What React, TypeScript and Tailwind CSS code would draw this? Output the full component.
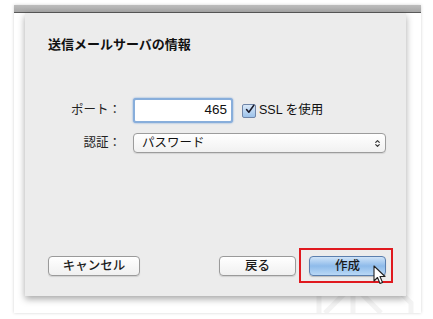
import { ChevronUp, ChevronDown } from 'lucide-react';

const font = { fontFamily: '"Liberation Sans", "Noto Sans CJK JP", sans-serif' };

function Button({ label, primary = false, w }: { label: string; primary?: boolean; w: string }) {
  return (
    <button
      type="button"
      className={`flex h-[20px] ${w} shrink-0 items-center justify-center rounded-[4px] border text-[12.5px] font-medium leading-none text-[#1a1a1a] ${
        primary
          ? 'border-[#5b7fae] bg-gradient-to-b from-[#cfe3f8] via-[#8ebbea] to-[#b9d8f6] shadow-[0_1px_1px_rgba(0,0,0,0.2)]'
          : 'border-[#9a9a9a] bg-gradient-to-b from-[#ffffff] to-[#f0f0f0] shadow-[0_1px_1px_rgba(0,0,0,0.12)]'
      }`}
    >
      {label}
    </button>
  );
}

export default function App() {
  return (
    <div className="h-[319px] w-[433px] overflow-hidden bg-white pt-[5px] pl-[14px]" style={font}>
      {/* ウィンドウ本体 */}
      <div className="relative h-[308px] w-[407px] bg-white shadow-[0_0_3px_rgba(0,0,0,0.18)]">
        <div className="h-[8px] border-b border-[#5a5a5a] bg-gradient-to-b from-[#bdbdbd] to-[#a6a6a6]" />

        {/* 背景の薄い図形 */}
        <svg className="absolute right-0 bottom-0" width="110" height="40" viewBox="0 0 110 40">
          <path d="M8 0 L8 40 M42 0 L42 40 M42 12 L70 40 M42 12 L14 40 M70 0 L100 30 L100 40" stroke="#f3f3f3" strokeWidth="5" fill="none" />
        </svg>

        {/* シート */}
        <div className="relative ml-[11px] flex h-[283px] w-[381px] flex-col bg-[#ececec] pt-[24px] pr-[20px] pb-[20px] pl-[23px] shadow-[0_3px_7px_rgba(0,0,0,0.35)]">
          <h1 className="text-[13px] font-bold leading-[16px] text-[#111]">送信メールサーバの情報</h1>

          <div className="mt-[45px] flex flex-col gap-[10px]">
            <div className="flex items-center">
              <span className="w-[73px] shrink-0 text-right text-[12.5px] text-[#222]">ポート：</span>
              <div className="ml-[12px] flex h-[25px] w-[100px] shrink-0 items-center justify-end rounded-[3px] border-[2px] border-[#88aedb] bg-white pr-[4px] text-[13.5px] text-[#111] shadow-[0_0_2px_#6d9bd6]">
                465
              </div>
              <span className="ml-[9px] flex h-[14px] w-[14px] shrink-0 items-center justify-center rounded-[2px] border border-[#6f85a8] bg-gradient-to-b from-[#d9e8f8] to-[#9cc2ea]">
                <svg width="13" height="13" viewBox="0 0 13 13" className="-mt-[3px] ml-[2px]">
                  <path d="M2 6.5 L5 10 L11.5 1" stroke="#1b1b2b" strokeWidth="2" fill="none" strokeLinecap="round" strokeLinejoin="round" />
                </svg>
              </span>
              <span className="ml-[3px] text-[12.5px] text-[#111]">SSL を使用</span>
            </div>
            <div className="flex items-center">
              <span className="w-[73px] shrink-0 text-right text-[12.5px] text-[#222]">認証：</span>
              <div className="ml-[12px] flex h-[20px] w-[253px] shrink-0 items-center justify-between rounded-[4px] border border-[#9c9c9c] bg-gradient-to-b from-white to-[#f1f1f1] pr-[4px] pl-[8px] text-[12.5px] text-[#111] shadow-[0_1px_1px_rgba(0,0,0,0.1)]">
                パスワード
                <span className="flex flex-col items-center text-[#333]">
                  <ChevronUp className="-mb-[3px] h-[7px] w-[7px]" strokeWidth={4} />
                  <ChevronDown className="h-[7px] w-[7px]" strokeWidth={4} />
                </span>
              </div>
            </div>
          </div>

          <div className="mt-auto flex items-center">
            <Button label="キャンセル" w="w-[92px]" />
            <div className="ml-auto flex gap-[13px]">
              <Button label="戻る" w="w-[77px]" />
              <Button label="作成" w="w-[77px]" primary />
            </div>
          </div>

          {/* 強調枠 */}
          <div className="pointer-events-none absolute top-[235px] left-[274px] h-[35px] w-[94px] border-[2px] border-[#e0191f]" />
          {/* カーソル */}
          <svg className="absolute top-[252px] left-[348px]" width="14" height="20" viewBox="0 0 14 20">
            <path d="M1 1 L1 16 L4.5 12.5 L7 18.5 L9.5 17.5 L7 11.5 L12 11.5 Z" fill="white" stroke="#222" strokeWidth="1.1" strokeLinejoin="round" />
          </svg>
        </div>
      </div>
    </div>
  );
}
